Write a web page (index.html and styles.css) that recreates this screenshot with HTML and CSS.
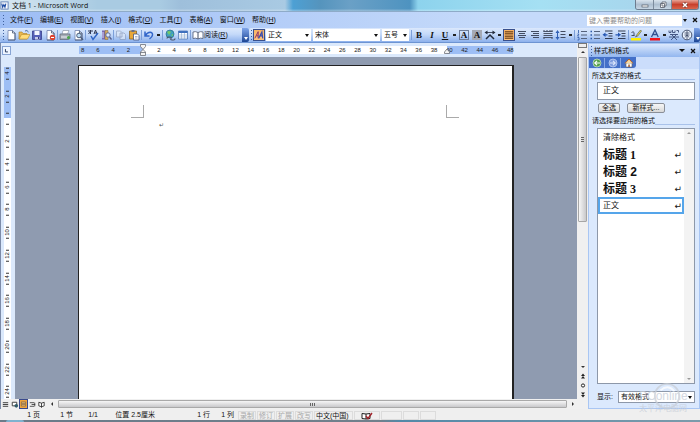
FILE: index.html
```html
<!DOCTYPE html>
<html lang="zh-CN">
<head>
<meta charset="utf-8">
<title>文档 1 - Microsoft Word</title>
<link rel="stylesheet" href="styles.css">
</head>
<body>
<svg class="defs" aria-hidden="true">
  <symbol id="page" viewBox="0 0 12 12"><path d="M3 1.5h4.500l2.500 2.500v7H3z" fill="#fff" stroke="#7183ad" stroke-width=".8"/><path d="M7.500 1.500V4H10M10 4v7H3" fill="none" stroke="#44546e" stroke-width=".8"/></symbol>
  <symbol id="lines" viewBox="0 0 12 12"><path d="M1.500 2.500h9M1.500 4.500h9M1.500 6.500h9M1.500 8.500h9" stroke="#4b5468" stroke-width="1.200"/></symbol>
</svg>
<div class="window">
  <header class="title">
    <svg class="word" viewBox="0 0 10 10"><rect x="1" y="1" width="8" height="8" fill="#fff" stroke="#5c7db5"/><path d="M2 3l1 4 1.300-3L5.500 7l1-4" fill="none" stroke="#1d4ba3" stroke-width="1.200"/></svg>
    <h1>文档 1 - Microsoft Word</h1>
    <div class="captions">
      <button aria-label="最小化"><svg viewBox="0 0 12 8"><rect x="3" y="4" width="6" height="2" fill="#fff" stroke="#555c68" stroke-width=".7"/></svg></button>
      <button aria-label="还原"><svg viewBox="0 0 12 8"><path d="M5 1h4v4H5zM3.500 2.500h4v4h-4z" fill="#fff" stroke="#555c68" stroke-width=".8"/></svg></button>
      <button class="close" aria-label="关闭"><svg viewBox="0 0 12 8"><path d="M4 2l4 4M8 2L4 6" stroke="#6b2a22" stroke-width="2.600"/><path d="M4 2l4 4M8 2L4 6" stroke="#fff" stroke-width="1.600"/></svg></button>
    </div>
  </header>

  <nav class="menu">
    <span class="grip"></span>
    <button>文件(<u>F</u>)</button><button>编辑(<u>E</u>)</button><button>视图(<u>V</u>)</button><button>插入(<u>I</u>)</button><button>格式(<u>O</u>)</button><button>工具(<u>T</u>)</button><button>表格(<u>A</u>)</button><button>窗口(<u>W</u>)</button><button>帮助(<u>H</u>)</button>
    <input class="ask" type="text" aria-label="帮助" placeholder="键入需要帮助的问题">
    <span class="arrow"></span>
    <button class="x" aria-label="关闭文档"><svg viewBox="0 0 8 8"><path d="M2 2l4 4M6 2L2 6" stroke="#111" stroke-width="1.300"/></svg></button>
  </nav>

  <div class="toolbars">
    <div class="bar standard">
      <span class="grip"></span>
      <button aria-label="新建"><svg><use href="#page"/></svg></button>
      <button aria-label="打开"><svg viewBox="0 0 12 12"><path d="M1 10V3h3l1 1.500h4V10z" fill="#e9b74e" stroke="#b08020" stroke-width=".6"/><path d="M1 10l2.500-4.500H12L9.500 10z" fill="#ffdc7a" stroke="#b98b2c" stroke-width=".6"/><path d="M7 2q2-1.500 3.500 1" fill="none" stroke="#3b5d99" stroke-width=".9"/></svg></button>
      <button aria-label="保存"><svg viewBox="0 0 12 12"><path d="M1.500 2h9v8.500h-9z" fill="#5560b8" stroke="#363f8c" stroke-width=".8"/><path d="M3.500 2h5v4h-5z" fill="#f3f6ff"/><path d="M4 8h4.500v2.500H4z" fill="#c6cbe8"/><path d="M7 8h1v2H7z" fill="#30387f"/></svg></button>
      <button aria-label="权限"><svg><use href="#page"/></svg><svg class="over" viewBox="0 0 12 12"><circle cx="8.500" cy="8.500" r="2.700" fill="#dc4432"/><path d="M7 8.500h3" stroke="#fff"/></svg></button>
      <i class="sep"></i>
      <button aria-label="打印"><svg viewBox="0 0 12 12"><path d="M4 1.500h6L8.500 5H3z" fill="#fff" stroke="#7c879b" stroke-width=".6"/><path d="M1 5h10v4.500l-1.500 1H1z" fill="#a5acb6" stroke="#5b6474" stroke-width=".7"/><path d="M2 8h7" stroke="#eef1f5"/><circle cx="9.500" cy="8.500" r="1.500" fill="#4aa84c"/></svg></button>
      <button aria-label="打印预览"><svg><use href="#page"/></svg><svg class="over" viewBox="0 0 12 12"><circle cx="7" cy="6.500" r="2.300" fill="#bcdcf5" stroke="#4d5d7b"/><path d="M8.500 8l2.500 3" stroke="#4d5d7b" stroke-width="1.400"/></svg></button>
      <i class="sep"></i>
      <button aria-label="拼写和语法"><svg viewBox="0 0 12 12"><path d="M1 2h5M3.500 1v4M1.500 5L3 3M7 5l1.500-4L10 5M7.500 4h2" fill="none" stroke="#303b58"/><path d="M4 7l2 3.500L11 4" fill="none" stroke="#2f66c8" stroke-width="1.500"/></svg></button>
      <button aria-label="信息检索"><svg viewBox="0 0 12 12"><path d="M2 1.500h3v9H2z" fill="#796bb3"/><path d="M5 1.500h3v9H5z" fill="#d6ad62" stroke="#82673b" stroke-width=".5"/><path d="M3 3v6" stroke="#dbd5f2"/><circle cx="8" cy="6" r="2.200" fill="#dbeaff" stroke="#57618e" stroke-width=".9"/><path d="M9.500 8l2 2.500" stroke="#57618e" stroke-width="1.300"/></svg></button>
      <i class="sep"></i>
      <button class="off" aria-label="复制"><svg viewBox="0 0 12 12"><path d="M1.500 2h4L7 3.500V8H1.500zM5 4h4l1.500 1.500v5H5z" fill="#dde8f8" stroke="#8593b0" stroke-width=".8"/></svg></button>
      <button aria-label="粘贴"><svg viewBox="0 0 12 12"><path d="M1.500 2h7v8h-7z" fill="#e8a738" stroke="#8a6427" stroke-width=".8"/><path d="M3.500 1h3v2h-3z" fill="#697087"/><path d="M5.500 5h4L11 6.500V11H5.500z" fill="#fff" stroke="#46577e" stroke-width=".8"/><path d="M7 7.500h2.500M7 9h2.500" stroke="#7281a8" stroke-width=".6"/></svg></button>
      <i class="sep"></i>
      <button aria-label="撤消"><svg viewBox="0 0 12 12"><path d="M2 2.500V7h4.500M2.500 6.500C5 2 10 2.500 9.500 6 9.300 8 8 9 6.500 10" fill="none" stroke="#3165c9" stroke-width="1.500"/></svg></button>
      <span class="drop"></span>
      <i class="sep"></i>
      <button aria-label="超链接"><svg viewBox="0 0 12 12"><circle cx="6" cy="5" r="4" fill="#41a0bd" stroke="#276e8a" stroke-width=".7"/><path d="M3 3q2-2 4 0L5 6zM7 6l2-1v2z" fill="#74ca67"/><path d="M3 9.500q0-1.500 1.500-1.500H6q1.500 0 1.500 1.500M6.500 9.500Q6.500 11 8 11h1.500q1.500 0 1.500-1.500" fill="none" stroke="#4c5667" stroke-width="1.200"/></svg></button>
      <button aria-label="插入表格"><svg viewBox="0 0 12 12"><path d="M1.500 2h9v8h-9z" fill="#fff" stroke="#4e76b5" stroke-width=".8"/><path d="M1.500 2h9v2h-9z" fill="#3f70bd"/><path d="M1.500 6h9M1.500 8h9M4.500 4v6M7.500 4v6" stroke="#8ca9d2" stroke-width=".6"/></svg></button>
      <i class="sep"></i>
      <button class="read"><svg viewBox="0 0 12 12"><path d="M6 3.500Q3.500 2 1 3v6.500Q3.500 8.500 6 10q2.500-1.500 5-.5V3Q8.500 2 6 3.500z" fill="#fff" stroke="#5c6880" stroke-width=".9"/><path d="M6 3.500V10" stroke="#424e66"/></svg>阅读(<u>R</u>)</button>
      <button class="cap" aria-label="工具栏选项"><span class="arrow"></span></button>
    </div>

    <div class="bar format">
      <span class="grip"></span>
      <button class="on" aria-label="格式窗格"><svg viewBox="0 0 12 12"><path d="M1 10L5 2v8M3 7h2" fill="none" stroke="#8f3568" stroke-width="1.200"/><path d="M5.500 10l4-7.500 1 7.500M7.500 7h3" fill="none" stroke="#3e4fae" stroke-width="1.500"/></svg></button>
      <span class="combo s1"><select aria-label="样式"><option>正文</option></select></span>
      <span class="combo s2"><select aria-label="字体"><option>宋体</option></select></span>
      <span class="combo s3"><select aria-label="字号"><option>五号</option></select></span>
      <i class="sep"></i>
      <button class="glyph" aria-label="加粗"><b>B</b></button>
      <button class="glyph" aria-label="倾斜"><b><em>I</em></b></button>
      <button class="glyph" aria-label="下划线"><b><u>U</u></b></button>
      <span class="drop"></span>
      <button class="glyph" aria-label="字符边框"><span class="boxed">A</span></button>
      <button class="glyph" aria-label="字符底纹"><span class="shaded">A</span></button>
      <button aria-label="字符缩放"><svg viewBox="0 0 12 12"><path d="M2 10l4-4 4 4" fill="none" stroke="#222b3c" stroke-width="1.500"/><path d="M2 3.500h8" stroke="#222b3c" stroke-width=".8"/><path d="M3.500 1.500L.5 3.500l3 2zM8.500 1.500l3 2-3 2z" fill="#222b3c"/></svg></button>
      <span class="drop"></span>
      <button class="on" aria-label="两端对齐"><svg viewBox="0 0 12 12"><path d="M1 2h10M1 4h10M1 6h10M1 8h10M1 10h10" stroke="#8a5928" stroke-width="1.400"/></svg></button>
      <button aria-label="居中"><svg viewBox="0 0 12 12"><path d="M2 2.500h8M3 4.500h6M2 6.500h8M3 8.500h6" stroke="#424c62" stroke-width="1.200"/></svg></button>
      <button aria-label="右对齐"><svg viewBox="0 0 12 12"><path d="M2 2.500h8M4 4.500h6M2 6.500h8M4 8.500h6" stroke="#424c62" stroke-width="1.200"/></svg></button>
      <button aria-label="分散对齐"><svg><use href="#lines"/></svg><svg class="over" viewBox="0 0 12 12"><path d="M2 1v2M5 1v2M8 1v2M10 1v2M2 8v2M10 8v2" stroke="#424c62"/></svg></button>
      <button aria-label="行距"><svg viewBox="0 0 12 12"><path d="M5.500 2.500H10.500M5.500 5.500H10.500M5.500 8.500H10.500" stroke="#424c62" stroke-width="1.100"/><path d="M2.500 2v8" stroke="#3261b5"/><path d="M.5 4l2-3 2 3zM.5 8l2 3 2-3z" fill="#3261b5"/></svg></button>
      <span class="drop"></span>
      <i class="sep"></i>
      <button aria-label="编号"><svg viewBox="0 0 12 12"><path d="M5 2.500h6M5 6h6M5 9.500h6" stroke="#55627c" stroke-width="1.100"/><path d="M2.500 1v3M1.500 5h1.500L1.500 7H3M1.500 8.500H3v2.500H1.500" fill="none" stroke="#2d59a8" stroke-width=".8"/></svg></button>
      <button aria-label="项目符号"><svg viewBox="0 0 12 12"><path d="M5 2.500h6M5 6h6M5 9.500h6" stroke="#55627c" stroke-width="1.100"/><path d="M1.500 1.800H3v1.400H1.500zM1.500 5.300H3v1.400H1.500zM1.500 8.800H3v1.400H1.500z" fill="#2d59a8"/></svg></button>
      <button aria-label="减少缩进"><svg viewBox="0 0 12 12"><path d="M3 2h7.500M6.500 4.500H10.500M6.500 7H10.500M3 9.500h7.500" stroke="#323c52" stroke-width="1.200"/><path d="M5.500 5.800H2" stroke="#2456b3" stroke-width="1.200"/><path d="M3.500 3.500L.5 5.800l3 2.300z" fill="#2456b3"/></svg></button>
      <button aria-label="增加缩进"><svg viewBox="0 0 12 12"><path d="M3 2h7.500M6.500 4.500H10.500M6.500 7H10.500M3 9.500h7.500" stroke="#323c52" stroke-width="1.200"/><path d="M.5 5.800H4" stroke="#2456b3" stroke-width="1.200"/><path d="M3 3.500l3 2.300-3 2.300z" fill="#2456b3"/></svg></button>
      <i class="sep"></i>
      <button aria-label="突出显示"><svg viewBox="0 0 12 12"><path d="M1 9h10v2.500H1z" fill="#fff200"/><path d="M1.500 6.500h3M1.500 3.500q2-1.500 2.500 0v3" fill="none" stroke="#333f59" stroke-width=".9"/><path d="M10.500 1L7 5.500 5.500 8 8 6.800 11.500 2z" fill="#e6dd4b" stroke="#565c62" stroke-width=".7"/></svg></button>
      <span class="drop"></span>
      <button aria-label="字体颜色"><svg viewBox="0 0 12 12"><path d="M1 9h10v2.500H1z" fill="#f3141b"/><path d="M2.500 8L6 1l3.200 7M4 5.500h4" fill="none" stroke="#33508f" stroke-width="1.300"/></svg></button>
      <span class="drop"></span>
      <button aria-label="拼音指南"><svg viewBox="0 0 12 12"><path d="M1 1.500v2h2v-2M4.500 1v2.500H7v-2M8.500 1.500h2v2M2 5.500h8M3.500 5.500L9 11M8.500 5.500L3 11M1 8h10" fill="none" stroke="#3b4c78" stroke-width=".9"/></svg></button>
      <button aria-label="带圈字符"><svg viewBox="0 0 12 12"><circle cx="6" cy="6" r="4.800" fill="#e9f1fd" stroke="#3a4663" stroke-width=".9"/><path d="M6 2v2M3.500 4h5M3.500 6h5M6 4v6M4 8.500L6 6l2 2.500" fill="none" stroke="#3a4663" stroke-width=".8"/></svg></button>
      <button class="cap" aria-label="工具栏选项"><span class="arrow"></span></button>
    </div>
  </div>

  <div class="main">
    <section class="editor">
      <div class="hruler">
        <button class="tab" aria-label="制表符"><svg viewBox="0 0 10 10"><path d="M3.500 3v4H7" fill="none" stroke="#1b2f55" stroke-width="1.300"/></svg></button>
        <div class="scale">
          <div class="nums"><span>8</span><span>6</span><span>4</span><span>2</span><span></span><span>2</span><span>4</span><span>6</span><span>8</span><span>10</span><span>12</span><span>14</span><span>16</span><span>18</span><span>20</span><span>22</span><span>24</span><span>26</span><span>28</span><span>30</span><span>32</span><span>34</span><span>36</span><span>38</span><span>40</span><span>42</span><span>44</span><span>46</span><span>48</span></div>
          <svg class="indent first" viewBox="0 0 6 12"><path d="M.5.500h5v2L3 5.500.500 2.500zM3 5.500L5.500 8v3.500h-5V8zM.5 8.500h5" fill="#f4f4f4" stroke="#6c7077" stroke-width=".8"/></svg>
          <svg class="indent right" viewBox="0 0 6 12"><path d="M3 5L5.500 8v1.500h-5V8z" fill="#f4f4f4" stroke="#6c7077" stroke-width=".8"/></svg>
        </div>
      </div>
      <div class="vruler">
        <div class="vscale"><div class="vnums"><span>4</span><span>2</span><span></span><span>2</span><span>4</span><span>6</span><span>8</span><span>10</span><span>12</span><span>14</span><span>16</span><span>18</span><span>20</span><span>22</span><span>24</span></div></div>
      </div>
      <div class="canvas">
        <article class="paper">
          <div class="crops"><i class="crop"></i><i class="crop r"></i></div>
          <p>↵</p>
        </article>
      </div>
      <div class="vscroll">
        <span class="split"></span><span class="up"></span><span class="thumb"></span><span class="down"></span>
        <svg class="browse" viewBox="0 0 8 28"><path d="M2 5l2-2.500L6 5zM2 7.500L4 5l2 2.500zM2 24l2 2.500L6 24zM2 21.500L4 24l2-2.500z" fill="#222"/><circle cx="4" cy="14.500" r="1.600" fill="#fff" stroke="#222"/></svg>
      </div>
      <div class="hscroll">
        <button aria-label="普通视图"><svg viewBox="0 0 10 10"><path d="M2 3h6M2 5h6M2 7h6" stroke="#333"/></svg></button>
        <button aria-label="Web 版式"><svg viewBox="0 0 10 10"><path d="M2.500 2.500h5v4h-5z" fill="#fff" stroke="#333"/><circle cx="7" cy="6.500" r="2" fill="#315b68"/></svg></button>
        <button class="on" aria-label="页面视图"><svg viewBox="0 0 10 10"><path d="M2 2h6v6H2z" fill="#f5cb82" stroke="#6e4f32" stroke-width=".8"/><path d="M2.500 4h5M2.500 6h5" stroke="#6e4f32"/></svg></button>
        <button aria-label="大纲视图"><svg viewBox="0 0 10 10"><path d="M2 3h5M4 5h4M2 7h5M7.500 3v4" stroke="#333" stroke-width=".9"/></svg></button>
        <button aria-label="阅读版式"><svg viewBox="0 0 10 10"><path d="M2 2.500l3 1 3-1V6.500L5 7.500 2 6.500zM5 3.500v5" fill="#fff" stroke="#222" stroke-width=".9"/></svg></button>
        <span class="left"></span><span class="hthumb"></span><span class="rightarr"></span>
      </div>
    </section>

    <aside class="pane">
      <div class="phead"><span class="grip"></span><h2>样式和格式</h2><span class="arrow big"></span><button class="x" aria-label="关闭窗格"><svg viewBox="0 0 8 8"><path d="M2 2l4 4M6 2L2 6" stroke="#111" stroke-width="1.300"/></svg></button></div>
      <div class="pnav"><div>
        <button aria-label="后退"><svg viewBox="0 0 10 10"><circle cx="5" cy="5" r="4" fill="#55a14a" stroke="#d4ead0" stroke-width=".7"/><path d="M8 5H3M5 2.800L2.800 5 5 7.200" fill="none" stroke="#fff" stroke-width="1.200"/></svg></button>
        <button aria-label="前进"><svg viewBox="0 0 10 10"><circle cx="5" cy="5" r="4" fill="#7f9dde" stroke="#c9d9f8" stroke-width=".7"/><path d="M2 5h5M5 2.800L7.200 5 5 7.200" fill="none" stroke="#dbe6fb" stroke-width="1.200"/></svg></button>
        <button aria-label="开始"><svg viewBox="0 0 10 10"><path d="M2 5h6v4H2z" fill="#fff" stroke="#686058" stroke-width=".6"/><path d="M1 5.300L5 1l4 4.300" fill="#f6d9a0" stroke="#b0602c" stroke-width="1"/><path d="M4.300 6.500h1.500V9H4.300z" fill="#a35d2b"/></svg></button>
      </div></div>
      <div class="pbody">
        <h3><span>所选文字的格式</span></h3>
        <div class="current">正文</div>
        <div class="acts"><button>全选</button><button class="wide">新样式...</button></div>
        <h3><span>请选择要应用的格式</span></h3>
        <div class="stylebox">
          <ul>
            <li><button>清除格式</button></li>
            <li class="h serif"><button>标题 1<span>↵</span></button></li>
            <li class="h"><button>标题 2<span>↵</span></button></li>
            <li class="h serif"><button>标题 3<span>↵</span></button></li>
            <li class="sel"><button>正文<span>↵</span></button></li>
          </ul>
          <div class="listscroll"><span class="up"></span><span class="down"></span></div>
        </div>
        <div class="show">
          <label for="show">显示:</label>
          <span class="combo showbox"><select id="show"><option>有效格式</option></select></span>
          <div class="mark"><svg viewBox="0 0 30 30"><circle cx="15" cy="15" r="13" fill="none" stroke="#c9ced6" stroke-width="2"/><path d="M8 9q8-7 15 1" fill="none" stroke="#fff" stroke-width="2"/></svg><strong>PConline</strong><small>太平洋电脑网</small></div>
        </div>
      </div>
    </aside>
  </div>

  <footer class="status">
    <span class="c pg">1 页</span><span class="c sec">1 节</span><span class="c of">1/1</span>
    <span class="c pos">位置 2.5厘米</span><span class="c ln">1 行</span><span class="c col">1 列</span>
    <span class="m">录制</span><span class="m">修订</span><span class="m">扩展</span><span class="m">改写</span>
    <span class="m lang">中文(中国)</span>
    <span class="m book"><svg viewBox="0 0 12 8"><path d="M1 1.500l4 .500 4-.5v5L5 7 1 6.500zM5 2v5" fill="#fff" stroke="#222"/><path d="M5 4l2 2.500L11 1" fill="none" stroke="#a3242c" stroke-width="1.400"/></svg></span>
    <span class="m e1"></span><span class="m e2"></span><span class="m e2"></span>
  </footer>
  <div class="desk"><i></i></div>
</div>
</body>
</html>
```

FILE: styles.css
```css
* { box-sizing: border-box; }
body { margin: 0; font: 7px/10px "Liberation Sans", "Noto Sans CJK SC", sans-serif; color: #111; }
h1, h2, h3, p, ul { margin: 0; padding: 0; font: inherit; }
li { list-style: none; }
button, input, select { font: inherit; color: inherit; border: 0; margin: 0; padding: 0; background: none; border-radius: 0; outline: 0; }
svg { display: block; }
.defs { position: absolute; width: 0; height: 0; }
.window { display: flex; flex-direction: column; height: 100vh; overflow: hidden; background: #efefef; }

.title { display: flex; align-items: center; flex: 0 0 12px; padding-right: 1px; background: linear-gradient(transparent 80%, rgba(255,255,255,.35)), linear-gradient(90deg, rgba(255,255,255,.55), transparent 14%), linear-gradient(90deg, #a9cbe2 0 160px, #9ebfdb 180px, #a9cae3 285px, #4da0d4 293px, #5594bd 320px, #6aa0c6 350px, #4e93c0 410px, #8dd3ed 418px, #a5e0f3 540px, #a9d0e9); border-bottom: 1px solid #8eabc8; }
.word { width: 9px; height: 9px; margin-right: 3px; }
.title h1 { flex: 1; font: 7px/11px "Open Sans", "Noto Sans CJK SC", sans-serif; }
.captions { display: flex; align-self: flex-start; border: 1px solid #6d7c8e; border-top: 0; border-radius: 0 0 3px 3px; overflow: hidden; }
.captions button { width: 18px; height: 9px; background: linear-gradient(#d9e4ee, #aebfd0 50%, #c7d6e4); border-right: 1px solid #7c8b9c; }
.captions .close { width: 26px; border-right: 0; background: linear-gradient(#e6a698, #c8402c 50%, #d8664c); }
.captions svg { width: 12px; height: 8px; margin: auto; }

.grip { flex: 0 0 1px; height: 10px; background: repeating-linear-gradient(#3f5f9c 0 1px, transparent 1px 3px); }
.arrow { display: block; width: 0; height: 0; border: 2px solid transparent; border-top: 3px solid #111; border-bottom: 0; }
.arrow.big { border-width: 3px 3px 0; }
.menu { display: flex; align-items: center; flex: 0 0 16px; padding: 0 1px 0 3px; background: linear-gradient(90deg, #9dbdf5, #c5dafa 70%); }
.menu .grip { margin-right: 6px; }
.menu > button { margin-right: 7px; white-space: nowrap; }
.menu .ask { flex: 0 0 92px; height: 11px; padding: 0 2px; margin-left: auto; background: #fff; }
.ask::placeholder { color: #8b8b8b; opacity: 1; }
.menu > .arrow { margin: 0 4px 0 1px; }
.menu > .x { margin: 0; }
.x svg { width: 8px; height: 8px; }

.toolbars { display: flex; flex: 0 0 15px; background: #b3cdf7; border-bottom: 1px solid #6d94d2; }
.bar { display: flex; align-items: center; gap: 1px; background: linear-gradient(#dbe8fc, #c4d9f9 45%, #8db1ec); border-radius: 2px; overflow: hidden; }
.standard { flex: 0 0 249px; padding-left: 3px; }
.format { flex: 1; padding-left: 2px; }
.bar button { position: relative; flex: 0 0 12px; height: 12px; }
.bar svg { width: 12px; height: 12px; }
.bar .over { position: absolute; left: 0; top: 0; }
.off { opacity: .7; }
.sep { flex: 0 0 1px; height: 10px; background: #7c9fd9; }
.drop { flex: 0 0 5px; height: 2px; background: linear-gradient(#222, #222) center / 3px 2px no-repeat; }
.bar .read { display: flex; align-items: center; flex: 0 0 auto; white-space: nowrap; }
.bar .cap { display: flex; align-items: flex-end; justify-content: center; flex: 0 0 7px; height: 14px; margin-left: auto; padding-bottom: 2px; background: linear-gradient(#7fa5ea, #1d4694); }
.cap .arrow { border-top-color: #fff; }
.bar .on { background: linear-gradient(#f7b264, #fcc27d); border: 1px solid #39508c; }
.bar .on svg { width: 10px; height: 10px; }
.glyph { font: 9px/12px "Liberation Serif", serif; text-align: center; }
.boxed, .shaded { display: block; margin: 1px; font-weight: bold; border: 1px solid #6d7c99; height: 10px; line-height: 8px; }
.shaded { background: #a4a9b5; border-color: #a4a9b5; }
.combo { position: relative; display: block; height: 12px; background: #fff; }
.combo::after { content: ""; position: absolute; right: 2px; top: 5px; border: 2px solid transparent; border-top: 3px solid #111; border-bottom: 0; }
.combo select { display: block; width: 100%; height: 100%; padding-left: 2px; appearance: none; }
.format .combo { margin-right: 1px; }
.s1 { flex: 0 0 45px; }
.s2 { flex: 0 0 67px; }
.s3 { flex: 0 0 27px; }

.main { display: flex; flex: 1; min-height: 0; }
.editor { display: grid; grid-template: 14px minmax(0, 1fr) 10px / 14px minmax(0, 1fr) 11px; flex: 1; min-width: 0; border-left: 1px solid #7c8ba8; background: #dbe9fc; }
.hruler { display: flex; grid-column: 1 / 3; align-items: center; background: #dbe9fc; }
.tab { flex: 0 0 9px; height: 9px; margin-left: 1px; border: 1px solid #87a4d4; background: #eef5ff; }
.tab svg { width: 7px; height: 7px; }
.scale { position: relative; flex: 0 0 434px; height: 8px; margin-left: 68px; background: linear-gradient(90deg, #9dbef5 64px, #fff 64px 368px, #9dbef5 368px); font: 6px/8px "Liberation Sans Narrow", "Liberation Sans", sans-serif; color: #222; }
.nums { display: grid; grid-template-columns: repeat(29, 1fr); margin: 0 -5px 0 -4px; text-align: center; }
.indent { position: absolute; top: -2px; width: 6px; height: 12px; }
.first { left: 61px; }
.indent.right { left: 365px; }
.vruler { padding: 10px 0 0 3px; }
.vscale { width: 7px; height: 100%; overflow: hidden; background: linear-gradient(#9dbef5 51px, #fff 51px); font: 6px/7px "Liberation Sans Narrow", "Liberation Sans", sans-serif; }
.vnums { display: grid; grid-template-rows: repeat(15, 1fr); height: 341px; margin-top: -5px; }
.vnums span { writing-mode: vertical-rl; transform: rotate(180deg); text-align: center; width: 7px; background: linear-gradient(#333, #333) 2px 25% / 3px 1px no-repeat, linear-gradient(#333, #333) 2px 75% / 3px 1px no-repeat; }
.canvas { padding: 8px 0 0 63px; overflow: hidden; background: #8f9bb0; }
.paper { width: 436px; height: 100%; background: #fff; border: solid #222; border-width: 1px 2px 0 1px; padding: 39px 53px 0 52px; }
.crops { display: flex; justify-content: space-between; }
.crop { width: 13px; height: 13px; border: solid #aaa; border-width: 0 1px 1px 0; }
.crop.r { border-width: 0 0 1px 1px; }
.paper p { padding: 2px 0 0 28px; font: 6px/9px "DejaVu Sans", sans-serif; color: #555; }
.vscroll { display: flex; flex-direction: column; align-items: center; grid-area: 1 / 3 / 3 / 4; background: #f0f0f0; }
.split { width: 9px; height: 5px; border: 1px solid #777; background: #eee; }
.up, .down, .left, .rightarr { border: 2px solid transparent; }
.up { border-bottom: 2px solid #333; margin: 1px 0 4px; }
.down { border-top: 2px solid #333; border-bottom: 0; margin: 3px 0; }
.thumb { width: 9px; height: 165px; border: 1px solid #a6a6a6; border-radius: 1px; background: repeating-linear-gradient(#666 0 1px, transparent 1px 2px) center / 3px 5px no-repeat, linear-gradient(90deg, #f6f6f6, #c9c9cb); }
.vscroll .down { margin-top: auto; }
.browse { width: 8px; height: 28px; }
.hscroll { display: flex; align-items: center; grid-column: 1 / 4; padding-right: 11px; background: #f0f0f0; }
.hscroll button { flex: 0 0 9px; height: 10px; }
.hscroll svg { width: 9px; height: 9px; }
.hscroll .on { background: #f0a63e; border: 1px solid #3a4a8c; }
.hscroll .on svg { width: 7px; height: 8px; }
.left { border-right: 2px solid #333; border-left: 0; margin: 0 5px; }
.hthumb { flex: 1; height: 8px; border: 1px solid #a9a9a9; border-radius: 1px; background: repeating-linear-gradient(90deg, #666 0 1px, transparent 1px 2px) center / 5px 3px no-repeat, linear-gradient(#f6f6f6, #c9c9cb); }
.rightarr { border-left: 2px solid #333; border-right: 0; margin: 0 3px 0 5px; }

.pane { display: flex; flex-direction: column; flex: 0 0 112px; border: 1px solid #a9c6f3; background: #dbe9fd; }
.phead { display: flex; align-items: center; flex: 0 0 13px; padding: 0 2px; background: linear-gradient(#dce9fd, #92b6ef); }
.phead h2 { flex: 1; padding-left: 2px; }
.phead .x { margin-left: 4px; }
.pnav { flex: 0 0 12px; background: #cbddfb; }
.pnav div { display: flex; align-items: center; width: 47px; height: 11px; background: #4470c8; border-radius: 0 0 3px 0; }
.pnav button { flex: 1; border-right: 1px solid #86a6e2; }
.pnav button:last-child { border-right: 0; }
.pnav svg { width: 10px; height: 10px; margin: auto; }
.pbody { display: flex; flex-direction: column; flex: 1; min-height: 0; padding: 0 4px 5px 8px; }
.pbody h3 { display: flex; flex: 0 0 13px; margin-left: -5px; padding-top: 1px; line-height: 11px; }
.pbody h3::after { content: ""; flex: 1; border-bottom: 1px solid #a9c2ea; margin-bottom: 2px; }
.current { flex: 0 0 18px; padding-left: 5px; border: 1px solid #8d98a9; background: #fff; font-size: 8px; line-height: 16px; }
.acts { display: flex; gap: 7px; margin: 3px 0 1px 1px; }
.acts button { width: 22px; height: 10px; border: 1px solid #8a8f98; border-radius: 2px; background: linear-gradient(#f6f6f6, #d8d8d8); line-height: 8px; }
.acts .wide { width: 38px; }
.stylebox { display: flex; flex: 1; min-height: 0; margin-top: 1px; border: 1px solid #8d98a9; background: #fff; }
.stylebox ul { flex: 1; }
.stylebox button { display: flex; align-items: center; justify-content: space-between; width: 100%; height: 17px; padding: 0 2px 0 5px; font-size: 8px; }
.stylebox .h button { font-size: 12px; font-weight: bold; }
.stylebox .serif button { font-family: "Liberation Serif", "Noto Sans CJK SC", serif; }
.stylebox button span { font: 9px/10px "DejaVu Sans", sans-serif; }
.stylebox .sel button { border: 2px solid #55a5ea; padding: 0 0 0 3px; }
.listscroll { display: flex; flex-direction: column; align-items: center; justify-content: space-between; width: 10px; background: #f3f3f3; }
.listscroll .up { border-bottom-color: #999; }
.listscroll .down { border-top-color: #999; }
.show { position: relative; display: flex; align-items: center; justify-content: space-between; flex: 0 0 12px; margin-top: 7px; }
.showbox { flex: 0 0 77px; border: 1px solid #8d98a9; }
.showbox::after { top: 4px; }
.mark { position: absolute; right: -2px; top: 0; width: 58px; opacity: .75; color: #c6ccd6; pointer-events: none; }
.mark svg { position: absolute; left: 14px; top: -9px; width: 28px; height: 28px; }
.mark strong, .mark small { position: relative; display: block; white-space: nowrap; }
.mark strong { font: 12px/11px "Liberation Sans", sans-serif; }
.mark small { margin-top: 2px; font-size: 8px; line-height: 9px; }

.status { display: flex; align-items: center; flex: 0 0 11px; padding-top: 1px; white-space: nowrap; color: #111; }
.c { text-align: right; }
.pg { width: 40px; }
.sec { width: 33px; }
.of { width: 25px; }
.pos { width: 57px; }
.ln { width: 55px; }
.col { width: 24px; margin-right: 4px; }
.m { height: 9px; padding: 0 1px; margin-right: 1px; border: 1px solid #dcdcdc; line-height: 8px; color: #a8a8a8; }
.lang { color: #111; padding: 0 3px 0 1px; }
.book { padding: 0 6px; }
.book svg { width: 12px; height: 8px; }
.e1 { width: 21px; }
.e2 { width: 16px; }
.desk { flex: 0 0 2px; background: linear-gradient(90deg, #6b7c8a 70px, #71808c 380px, #5389a8 400px, #7c9bab); }
.desk i { display: block; width: 18px; height: 2px; margin-left: 6px; border-radius: 9px 9px 0 0; background: #7fb2cf; }
```
